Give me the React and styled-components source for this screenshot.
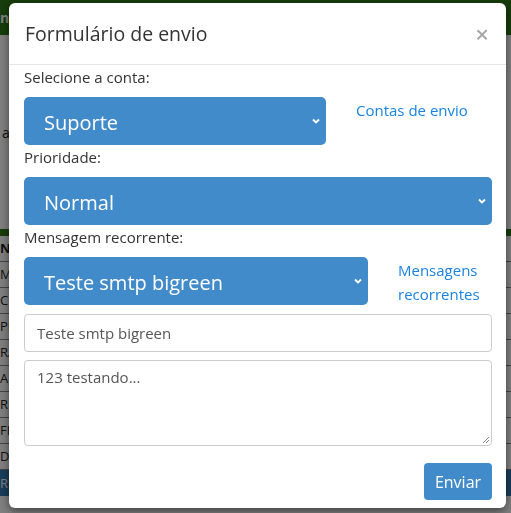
import React from "react";
import styled, { createGlobalStyle } from "styled-components";

const GlobalStyle = createGlobalStyle`
  html, body {
    margin: 0;
    padding: 0;
    width: 511px;
    height: 513px;
    overflow: hidden;
    font-family: "Open Sans", "Noto Sans", sans-serif;
  }
`;

const Page = styled.div`
  width: 511px;
  height: 513px;
  background: #fff;
  display: flex;
  flex-direction: column;
`;
const TopBar = styled.div`
  height: 35px;
  background: #2c7a16;
  color: #fff;
  font-size: 14px;
  line-height: 35px;
  font-weight: 700;
`;
const Gap = styled.div`
  height: ${(p) => p.h}px;
  padding-left: 2px;
  font-size: 14px;
  display: flex;
  align-items: center;
  color: #222;
`;
const GreenLine = styled.div`
  height: 7px;
  background: #2c7a16;
`;
const Row = styled.div`
  height: 25px;
  border-bottom: 1px solid #888;
  font-size: 13px;
  line-height: 25px;
  color: #222;
  font-weight: ${(p) => (p.head ? 700 : 400)};
`;
const BlueRow = styled.div`
  height: 26px;
  background: #337ab7;
  color: #fff;
  font-size: 13px;
  line-height: 26px;
`;

const Backdrop = styled.div`
  position: fixed;
  inset: 0;
  background: rgba(0, 0, 0, 0.5);
`;

const Modal = styled.div`
  position: fixed;
  left: 9px;
  top: 3px;
  width: 497px;
  height: 505px;
  box-sizing: border-box;
  background: #fff;
  border-radius: 6px;
  box-shadow: 0 3px 9px rgba(0, 0, 0, 0.5);
  display: flex;
  flex-direction: column;
`;
const Header = styled.div`
  height: 62px;
  box-sizing: border-box;
  border-bottom: 1px solid #e5e5e5;
  padding: 0 16px;
  display: flex;
  align-items: center;
  justify-content: space-between;
`;
const Title = styled.h4`
  margin: 0;
  font-size: 19.5px;
  font-weight: 400;
  color: #333;
`;
const Close = styled.span`
  font-size: 24px;
  font-weight: 600;
  color: #a8a8a8;
  margin-right: 1px;
`;
const Body = styled.div`
  padding: 0 14px 0 15px;
  display: flex;
  flex-direction: column;
`;
const Label = styled.label`
  font-size: 15px;
  line-height: 24px;
  margin-bottom: 8px;
  color: #333;
`;
const SelectRow = styled.div`
  display: flex;
  align-items: flex-start;
`;
const Select = styled.div`
  width: ${(p) => (p.w ? `${p.w}px` : "100%")};
  height: 48px;
  box-sizing: border-box;
  background: #428bca;
  border-radius: 5px;
  color: #fff;
  font-size: 20px;
  padding: 3px 5px 0 20px;
  display: flex;
  align-items: center;
  justify-content: space-between;
  flex-shrink: 0;
`;
const Chevron = () => (
  <svg width="10" height="8" viewBox="0 0 10 8" style={{ marginTop: -3 }}>
    <path d="M2 2.5 L5 5.5 L8 2.5" stroke="#fff" strokeWidth="1.8" fill="none" />
  </svg>
);
const SideLink = styled.a`
  padding-left: 30px;
  padding-top: 1px;
  font-size: 15px;
  line-height: 24px;
  color: #1a82e2;
  text-decoration: none;
`;
const Input = styled.div`
  margin-top: 8px;
  height: 38px;
  box-sizing: border-box;
  border: 1px solid #ccc;
  border-radius: 4px;
  padding: 0 12px;
  display: flex;
  align-items: center;
  font-size: 15px;
  color: #555;
`;
const TextArea = styled.div`
  position: relative;
  margin-top: 8px;
  height: 86px;
  box-sizing: border-box;
  border: 1px solid #ccc;
  border-radius: 4px;
  padding: 6px 12px;
  font-size: 15px;
  color: #555;
`;
const Grip = styled.svg`
  position: absolute;
  right: 1px;
  bottom: 1px;
`;
const Footer = styled.div`
  padding: 17px 14px 0 15px;
  display: flex;
  justify-content: flex-end;
`;
const Button = styled.button`
  width: 68px;
  height: 37px;
  border: none;
  border-radius: 4px;
  background: #428bca;
  color: #fff;
  font-family: inherit;
  font-size: 16px;
`;

const App = () => {
  const rows = ["M", "C", "PE", "RA", "AL", "RE", "FR", "DA"];
  return (
    <>
      <GlobalStyle />
      <Page>
        <TopBar>n</TopBar>
        <Gap h={194}>a</Gap>
        <GreenLine />
        <Row head>N</Row>
        {rows.map((r) => (
          <Row key={r}>{r}</Row>
        ))}
        <BlueRow>RI</BlueRow>
      </Page>
      <Backdrop />
      <Modal>
        <Header>
          <Title>Formulário de envio</Title>
          <Close>×</Close>
        </Header>
        <Body>
          <Label>Selecione a conta:</Label>
          <SelectRow>
            <Select w={302}>
              <span>Suporte</span>
              <Chevron />
            </Select>
            <SideLink href="#">Contas de envio</SideLink>
          </SelectRow>
          <Label>Prioridade:</Label>
          <Select>
            <span>Normal</span>
            <Chevron />
          </Select>
          <Label>Mensagem recorrente:</Label>
          <SelectRow>
            <Select w={344}>
              <span>Teste smtp bigreen</span>
              <Chevron />
            </Select>
            <SideLink href="#">Mensagens recorrentes</SideLink>
          </SelectRow>
          <Input>Teste smtp bigreen</Input>
          <TextArea>
            123 testando...
            <Grip width="10" height="10" viewBox="0 0 10 10">
              <path d="M9 3 L3 9 M9 6 L6 9" stroke="#888" strokeWidth="1" />
            </Grip>
          </TextArea>
        </Body>
        <Footer>
          <Button>Enviar</Button>
        </Footer>
      </Modal>
    </>
  );
};

export default App;
